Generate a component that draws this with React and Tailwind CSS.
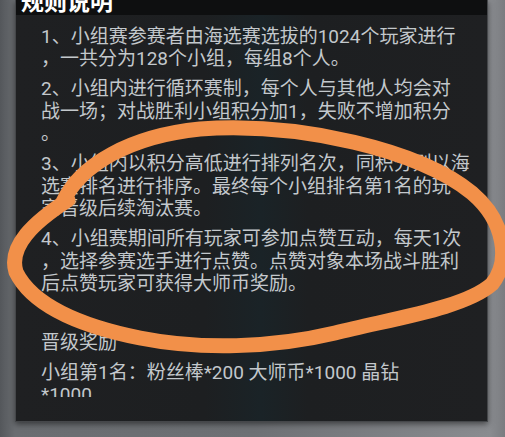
import React from "react";

const rules = [
  ["1、小组赛参赛者由海选赛选拔的1024个玩家进行", "，一共分为128个小组，每组8个人。"],
  ["2、小组内进行循环赛制，每个人与其他人均会对", "战一场；对战胜利小组积分加1，失败不增加积分", "。"],
  ["3、小组内以积分高低进行排列名次，同积分则以海", "选赛排名进行排序。最终每个小组排名第1名的玩", "家晋级后续淘汰赛。"],
  ["4、小组赛期间所有玩家可参加点赞互动，每天1次", "，选择参赛选手进行点赞。点赞对象本场战斗胜利", "后点赞玩家可获得大师币奖励。"],
];

const Scribble = () => (
  <svg className="absolute inset-0 pointer-events-none" width="505" height="437" viewBox="0 0 505 437">
    <path
      d="M63 202 C80 165 130 136 200 129 C300 122 420 150 472 193 C506 222 510 262 492 284 C465 308 395 318 335 333 C272 348 200 350 140 338 C80 326 32 305 16 272 C8 246 34 222 68 200"
      fill="none"
      stroke="#f29049"
      strokeWidth="15"
      strokeLinecap="round"
      strokeLinejoin="round"
    />
  </svg>
);

export default function App() {
  return (
    <div
      className="relative w-[505px] h-[437px] overflow-hidden bg-[linear-gradient(90deg,#54575b_0%,#6a6d71_3%,#6e7175_50%,#8a8c90_97%,#7a7c80_100%)]"
      style={{ fontFamily: 'Roboto, "Noto Sans CJK SC", sans-serif' }}
    >
      <div className="ml-[15px] w-[473px] h-[422px] flex flex-col border-l border-r border-b border-[#45474a] shadow-[0_2px_6px_rgba(0,0,0,0.5)]">
        <div className="h-[15px] bg-[#0e0f10] overflow-hidden">
          <div className="pl-[5px] -mt-[9px] text-[23px] leading-[23px] font-bold text-white">规则说明</div>
        </div>
        <div className="flex-1 bg-[linear-gradient(90deg,#1f2022_0%,#1d1f21_40%,#1a2327_52%,#1d1f21_62%,#1f2022_100%)]">
          <div className="h-[382px] overflow-hidden pl-[25px] pt-[10.75px] text-[19px] leading-[22.5px] text-[#c3c8cc]">
            {rules.map((lines, i) => (
              <div key={i} className="mb-[7.5px]">
                {lines.map((l, j) => (
                  <div key={j} className="whitespace-nowrap">{l}</div>
                ))}
              </div>
            ))}
            <div className="pt-[28.5px] mb-[7.5px]">晋级奖励</div>
            <div className="whitespace-nowrap">小组第1名：粉丝棒*200 大师币*1000 晶钻</div>
            <div>*1000</div>
          </div>
        </div>
      </div>
      <Scribble />
    </div>
  );
}
